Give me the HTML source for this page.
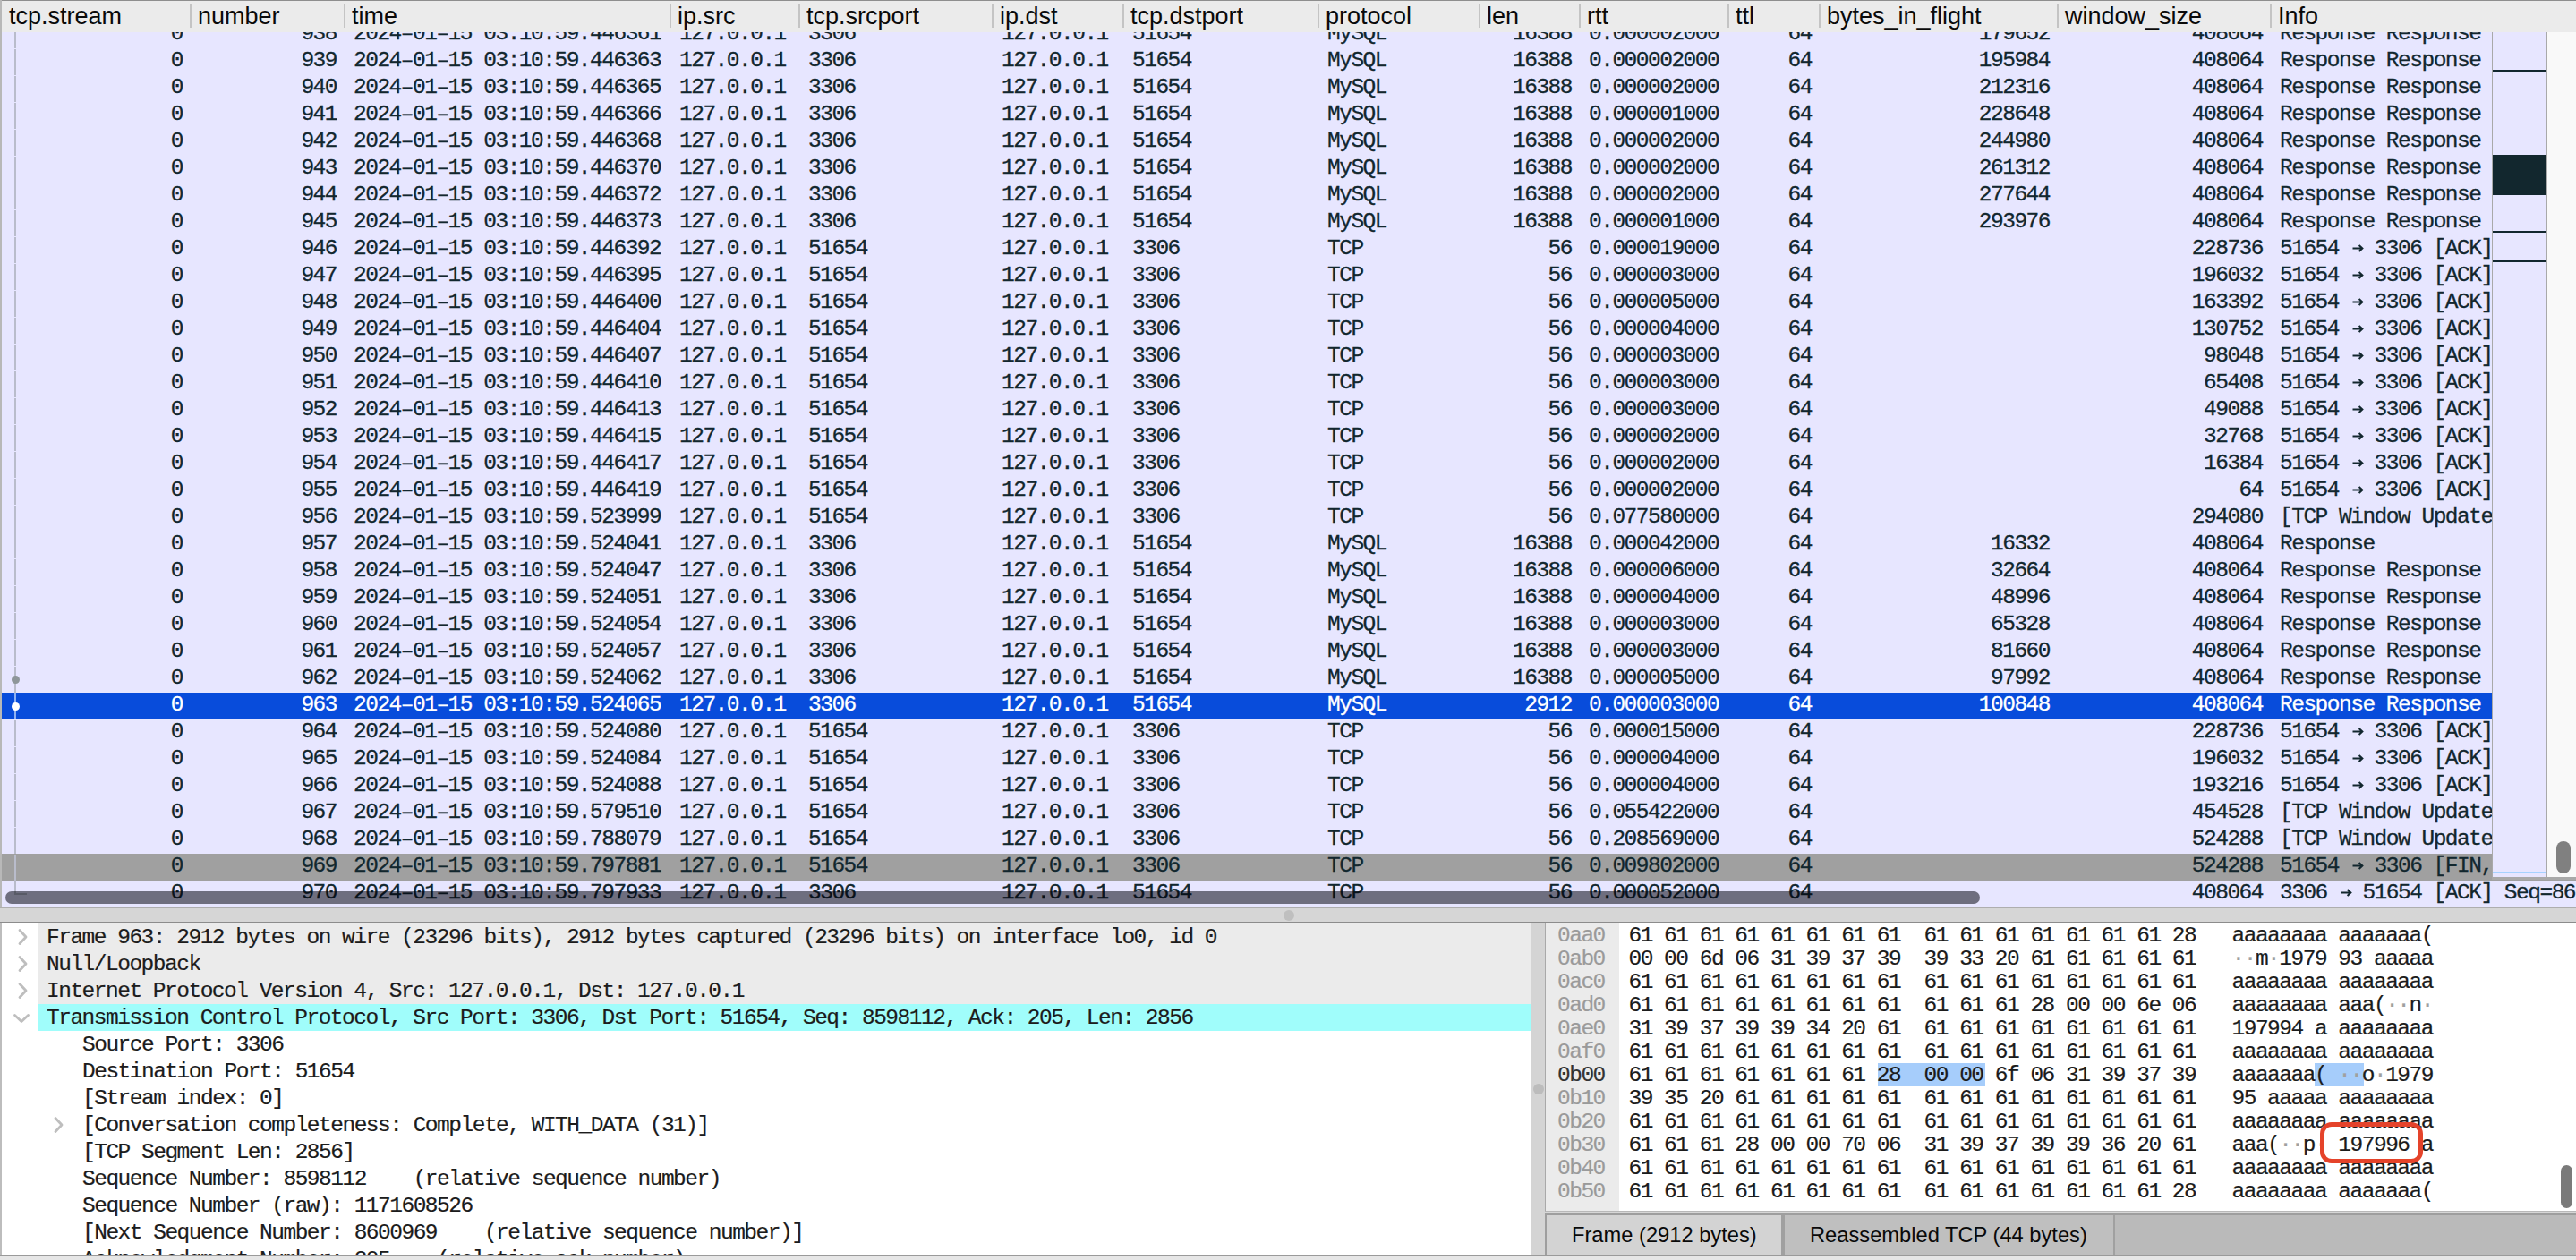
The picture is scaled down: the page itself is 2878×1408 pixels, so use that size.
<!DOCTYPE html><html><head><meta charset="utf-8"><style>html,body{margin:0;padding:0}
body{width:2878px;height:1408px;position:relative;overflow:hidden;background:#d6d6d6;font-family:"Liberation Mono",monospace;}
#pl{position:absolute;left:0;top:0;width:2878px;height:1014px;overflow:hidden;background:#e7e6ff;}
#rows{position:absolute;left:0;top:0;width:2878px;height:1014px;}
.r{position:absolute;left:2px;width:2876px;height:30px;background:#e7e6ff;color:#12272e;}
.r.sel{background:#084cdb;color:#fff}
.r.fin{background:#a0a0a0;}
.c{position:absolute;top:-1px;font-weight:normal;-webkit-text-stroke:0.3px currentColor;font-size:24.5px;letter-spacing:-1.5px;line-height:30px;white-space:pre;}
.c.R{text-align:right}
#hdr{position:absolute;left:0;top:0;width:2878px;height:36px;background:#ebebeb;border-top:1.5px solid #8e8e8e;box-sizing:border-box;font-family:"Liberation Sans",sans-serif;font-size:27px;color:#0a0a0a}
.h{position:absolute;top:0;line-height:34px;white-space:pre}
.sep{position:absolute;top:4px;width:2px;height:26px;background:#c4c4c4}
#lb{position:absolute;left:0;top:0;width:2px;height:1014px;background:#b8b8b8}
#tree{position:absolute;left:16px;top:36px;width:2px;height:964px;background:repeating-linear-gradient(to bottom,#b9bccb 0,#b9bccb 29px,transparent 29px,transparent 30px);background-position:0 -11px}
#treetick{position:absolute;left:16px;top:998px;width:14px;height:2px;background:#b9bccb}
#treesel{position:absolute;left:16px;top:774px;width:2px;height:30px;background:#8fb1f2}
.dot{position:absolute;width:9px;height:9px;border-radius:50%}
#mm{position:absolute;left:2784px;top:36px;width:60px;height:944px;background:#e7e6ff;border-left:1px solid #a9a9a9;border-right:1px solid #a9a9a9;border-bottom:3px solid #a9a9a9}
#mm i{position:absolute;left:0;width:60px;background:#12272e}
#vs{position:absolute;left:2846px;top:36px;width:32px;height:944px;background:#f9f9f9;border-bottom:3px solid #a9a9a9}
#vs i{position:absolute;left:10px;top:904px;width:16px;height:36px;border-radius:8px;background:#808080}
#hs{position:absolute;left:6px;top:996px;width:2206px;height:14px;border-radius:7px;background:rgba(0,0,10,0.52)}
#plb{position:absolute;left:0;top:1014px;width:2878px;height:1px;background:#aeaeae}
#sp1{position:absolute;left:0;top:1015px;width:2878px;height:15px;background:#d6d6d6;border-bottom:1.5px solid #8c8c8c}
#sp1 i{position:absolute;left:1434px;top:2px;width:12px;height:12px;border-radius:50%;background:#bfbfbf}
#det{position:absolute;left:0;top:1031px;width:1711px;height:373px;background:#fff;border-left:2px solid #bdbdbd;border-right:1px solid #a9a9a9;border-bottom:2px solid #9a9a9a;overflow:hidden;box-sizing:border-box}
.dbg{position:absolute;left:40px;width:1670px;height:30px}
.dbg.g{background:#ebebeb}
.dbg.cy{background:#a0fdfb}
.dt{position:absolute;font-weight:normal;-webkit-text-stroke:0.2px currentColor;font-size:24.5px;letter-spacing:-1.5px;line-height:30px;white-space:pre;color:#1c1c1c}
.ar{position:absolute}
#sp2{position:absolute;left:1711px;top:1031px;width:15px;height:373px;background:#d4d4d4}
#sp2 i{position:absolute;left:2px;top:180px;width:12px;height:12px;border-radius:50%;background:#bcbcbc}
#byt{position:absolute;left:1726px;top:1031px;width:1152px;height:323px;background:#fff;border-left:1px solid #a9a9a9;border-bottom:1.5px solid #b8b8b8;overflow:hidden;box-sizing:border-box}
#offcol{position:absolute;left:0;top:0;width:82px;height:330px;background:#ebebeb}
.off,.hx,.as{position:absolute;font-weight:normal;-webkit-text-stroke:0.2px currentColor;font-size:24.5px;letter-spacing:-1.5px;line-height:26px;white-space:pre;color:#1c1c1c}
.off{left:13px;color:#9a9a9a}
.off.dk{color:#333}
.hx{left:92.5px}
.as{left:766.5px}
.as s{text-decoration:none;color:#a0a0a0}
.hl{position:absolute;height:26px;background:#a6cdfb}
#redbox{position:absolute;left:864.5px;top:223px;width:105px;height:36px;border:5.5px solid #e5432a;border-radius:13px}
#bvs{position:absolute;left:1134px;top:271px;width:13px;height:48px;border-radius:7px;background:#7a7a7a}
#tabs{position:absolute;left:1726px;top:1356px;width:1152px;height:48px;background:#bababa;border-top:2px solid #9e9e9e;border-left:2px solid #9e9e9e;border-bottom:2.5px solid #9a9a9a;box-sizing:border-box;font-family:"Liberation Sans",sans-serif;font-size:23.7px;color:#0a0a0a}
.tab{position:absolute;top:0;height:44px;line-height:44px;box-sizing:border-box}
.t1{left:0;width:266px;background:#d3d3d3;border-right:4px solid #a0a0a0;padding-left:28px}
.t2{left:266px;width:369px;background:#bfbfbf;border-right:2px solid #a0a0a0;padding-left:28px}
#bot{position:absolute;left:0;top:1402px;width:2878px;height:6px;background:#e6e6e6;border-top:2px solid #9a9a9a;box-sizing:border-box}

.c u{text-decoration:none;display:inline-block;width:13.2px;height:0;position:relative}
.c u svg{position:absolute;left:1.5px;top:-11.5px}
</style></head><body>
<div id="pl">
<div id="rows">
<div class="r" style="top:24px"><b class="c R" style="right:2674px">0</b><b class="c R" style="right:2502px">938</b><b class="c" style="left:393px">2024–01–15 03:10:59.446361</b><b class="c" style="left:757px">127.0.0.1</b><b class="c" style="left:901px">3306</b><b class="c" style="left:1117px">127.0.0.1</b><b class="c" style="left:1263px">51654</b><b class="c" style="left:1481px">MySQL</b><b class="c R" style="right:1122px">16388</b><b class="c" style="left:1773px">0.000002000</b><b class="c R" style="right:854px">64</b><b class="c R" style="right:588px">179652</b><b class="c R" style="right:350px">408064</b><b class="c" style="left:2545px">Response Response</b></div>
<div class="r" style="top:54px"><b class="c R" style="right:2674px">0</b><b class="c R" style="right:2502px">939</b><b class="c" style="left:393px">2024–01–15 03:10:59.446363</b><b class="c" style="left:757px">127.0.0.1</b><b class="c" style="left:901px">3306</b><b class="c" style="left:1117px">127.0.0.1</b><b class="c" style="left:1263px">51654</b><b class="c" style="left:1481px">MySQL</b><b class="c R" style="right:1122px">16388</b><b class="c" style="left:1773px">0.000002000</b><b class="c R" style="right:854px">64</b><b class="c R" style="right:588px">195984</b><b class="c R" style="right:350px">408064</b><b class="c" style="left:2545px">Response Response</b></div>
<div class="r" style="top:84px"><b class="c R" style="right:2674px">0</b><b class="c R" style="right:2502px">940</b><b class="c" style="left:393px">2024–01–15 03:10:59.446365</b><b class="c" style="left:757px">127.0.0.1</b><b class="c" style="left:901px">3306</b><b class="c" style="left:1117px">127.0.0.1</b><b class="c" style="left:1263px">51654</b><b class="c" style="left:1481px">MySQL</b><b class="c R" style="right:1122px">16388</b><b class="c" style="left:1773px">0.000002000</b><b class="c R" style="right:854px">64</b><b class="c R" style="right:588px">212316</b><b class="c R" style="right:350px">408064</b><b class="c" style="left:2545px">Response Response</b></div>
<div class="r" style="top:114px"><b class="c R" style="right:2674px">0</b><b class="c R" style="right:2502px">941</b><b class="c" style="left:393px">2024–01–15 03:10:59.446366</b><b class="c" style="left:757px">127.0.0.1</b><b class="c" style="left:901px">3306</b><b class="c" style="left:1117px">127.0.0.1</b><b class="c" style="left:1263px">51654</b><b class="c" style="left:1481px">MySQL</b><b class="c R" style="right:1122px">16388</b><b class="c" style="left:1773px">0.000001000</b><b class="c R" style="right:854px">64</b><b class="c R" style="right:588px">228648</b><b class="c R" style="right:350px">408064</b><b class="c" style="left:2545px">Response Response</b></div>
<div class="r" style="top:144px"><b class="c R" style="right:2674px">0</b><b class="c R" style="right:2502px">942</b><b class="c" style="left:393px">2024–01–15 03:10:59.446368</b><b class="c" style="left:757px">127.0.0.1</b><b class="c" style="left:901px">3306</b><b class="c" style="left:1117px">127.0.0.1</b><b class="c" style="left:1263px">51654</b><b class="c" style="left:1481px">MySQL</b><b class="c R" style="right:1122px">16388</b><b class="c" style="left:1773px">0.000002000</b><b class="c R" style="right:854px">64</b><b class="c R" style="right:588px">244980</b><b class="c R" style="right:350px">408064</b><b class="c" style="left:2545px">Response Response</b></div>
<div class="r" style="top:174px"><b class="c R" style="right:2674px">0</b><b class="c R" style="right:2502px">943</b><b class="c" style="left:393px">2024–01–15 03:10:59.446370</b><b class="c" style="left:757px">127.0.0.1</b><b class="c" style="left:901px">3306</b><b class="c" style="left:1117px">127.0.0.1</b><b class="c" style="left:1263px">51654</b><b class="c" style="left:1481px">MySQL</b><b class="c R" style="right:1122px">16388</b><b class="c" style="left:1773px">0.000002000</b><b class="c R" style="right:854px">64</b><b class="c R" style="right:588px">261312</b><b class="c R" style="right:350px">408064</b><b class="c" style="left:2545px">Response Response</b></div>
<div class="r" style="top:204px"><b class="c R" style="right:2674px">0</b><b class="c R" style="right:2502px">944</b><b class="c" style="left:393px">2024–01–15 03:10:59.446372</b><b class="c" style="left:757px">127.0.0.1</b><b class="c" style="left:901px">3306</b><b class="c" style="left:1117px">127.0.0.1</b><b class="c" style="left:1263px">51654</b><b class="c" style="left:1481px">MySQL</b><b class="c R" style="right:1122px">16388</b><b class="c" style="left:1773px">0.000002000</b><b class="c R" style="right:854px">64</b><b class="c R" style="right:588px">277644</b><b class="c R" style="right:350px">408064</b><b class="c" style="left:2545px">Response Response</b></div>
<div class="r" style="top:234px"><b class="c R" style="right:2674px">0</b><b class="c R" style="right:2502px">945</b><b class="c" style="left:393px">2024–01–15 03:10:59.446373</b><b class="c" style="left:757px">127.0.0.1</b><b class="c" style="left:901px">3306</b><b class="c" style="left:1117px">127.0.0.1</b><b class="c" style="left:1263px">51654</b><b class="c" style="left:1481px">MySQL</b><b class="c R" style="right:1122px">16388</b><b class="c" style="left:1773px">0.000001000</b><b class="c R" style="right:854px">64</b><b class="c R" style="right:588px">293976</b><b class="c R" style="right:350px">408064</b><b class="c" style="left:2545px">Response Response</b></div>
<div class="r" style="top:264px"><b class="c R" style="right:2674px">0</b><b class="c R" style="right:2502px">946</b><b class="c" style="left:393px">2024–01–15 03:10:59.446392</b><b class="c" style="left:757px">127.0.0.1</b><b class="c" style="left:901px">51654</b><b class="c" style="left:1117px">127.0.0.1</b><b class="c" style="left:1263px">3306</b><b class="c" style="left:1481px">TCP</b><b class="c R" style="right:1122px">56</b><b class="c" style="left:1773px">0.000019000</b><b class="c R" style="right:854px">64</b><b class="c R" style="right:350px">228736</b><b class="c" style="left:2545px">51654 <u><svg width="13" height="9" viewBox="0 0 13 9"><path d="M0.5 4.5H11.2M7.6 1L11.3 4.5L7.6 8" fill="none" stroke="currentColor" stroke-width="2.1"/></svg></u> 3306 [ACK]</b></div>
<div class="r" style="top:294px"><b class="c R" style="right:2674px">0</b><b class="c R" style="right:2502px">947</b><b class="c" style="left:393px">2024–01–15 03:10:59.446395</b><b class="c" style="left:757px">127.0.0.1</b><b class="c" style="left:901px">51654</b><b class="c" style="left:1117px">127.0.0.1</b><b class="c" style="left:1263px">3306</b><b class="c" style="left:1481px">TCP</b><b class="c R" style="right:1122px">56</b><b class="c" style="left:1773px">0.000003000</b><b class="c R" style="right:854px">64</b><b class="c R" style="right:350px">196032</b><b class="c" style="left:2545px">51654 <u><svg width="13" height="9" viewBox="0 0 13 9"><path d="M0.5 4.5H11.2M7.6 1L11.3 4.5L7.6 8" fill="none" stroke="currentColor" stroke-width="2.1"/></svg></u> 3306 [ACK]</b></div>
<div class="r" style="top:324px"><b class="c R" style="right:2674px">0</b><b class="c R" style="right:2502px">948</b><b class="c" style="left:393px">2024–01–15 03:10:59.446400</b><b class="c" style="left:757px">127.0.0.1</b><b class="c" style="left:901px">51654</b><b class="c" style="left:1117px">127.0.0.1</b><b class="c" style="left:1263px">3306</b><b class="c" style="left:1481px">TCP</b><b class="c R" style="right:1122px">56</b><b class="c" style="left:1773px">0.000005000</b><b class="c R" style="right:854px">64</b><b class="c R" style="right:350px">163392</b><b class="c" style="left:2545px">51654 <u><svg width="13" height="9" viewBox="0 0 13 9"><path d="M0.5 4.5H11.2M7.6 1L11.3 4.5L7.6 8" fill="none" stroke="currentColor" stroke-width="2.1"/></svg></u> 3306 [ACK]</b></div>
<div class="r" style="top:354px"><b class="c R" style="right:2674px">0</b><b class="c R" style="right:2502px">949</b><b class="c" style="left:393px">2024–01–15 03:10:59.446404</b><b class="c" style="left:757px">127.0.0.1</b><b class="c" style="left:901px">51654</b><b class="c" style="left:1117px">127.0.0.1</b><b class="c" style="left:1263px">3306</b><b class="c" style="left:1481px">TCP</b><b class="c R" style="right:1122px">56</b><b class="c" style="left:1773px">0.000004000</b><b class="c R" style="right:854px">64</b><b class="c R" style="right:350px">130752</b><b class="c" style="left:2545px">51654 <u><svg width="13" height="9" viewBox="0 0 13 9"><path d="M0.5 4.5H11.2M7.6 1L11.3 4.5L7.6 8" fill="none" stroke="currentColor" stroke-width="2.1"/></svg></u> 3306 [ACK]</b></div>
<div class="r" style="top:384px"><b class="c R" style="right:2674px">0</b><b class="c R" style="right:2502px">950</b><b class="c" style="left:393px">2024–01–15 03:10:59.446407</b><b class="c" style="left:757px">127.0.0.1</b><b class="c" style="left:901px">51654</b><b class="c" style="left:1117px">127.0.0.1</b><b class="c" style="left:1263px">3306</b><b class="c" style="left:1481px">TCP</b><b class="c R" style="right:1122px">56</b><b class="c" style="left:1773px">0.000003000</b><b class="c R" style="right:854px">64</b><b class="c R" style="right:350px">98048</b><b class="c" style="left:2545px">51654 <u><svg width="13" height="9" viewBox="0 0 13 9"><path d="M0.5 4.5H11.2M7.6 1L11.3 4.5L7.6 8" fill="none" stroke="currentColor" stroke-width="2.1"/></svg></u> 3306 [ACK]</b></div>
<div class="r" style="top:414px"><b class="c R" style="right:2674px">0</b><b class="c R" style="right:2502px">951</b><b class="c" style="left:393px">2024–01–15 03:10:59.446410</b><b class="c" style="left:757px">127.0.0.1</b><b class="c" style="left:901px">51654</b><b class="c" style="left:1117px">127.0.0.1</b><b class="c" style="left:1263px">3306</b><b class="c" style="left:1481px">TCP</b><b class="c R" style="right:1122px">56</b><b class="c" style="left:1773px">0.000003000</b><b class="c R" style="right:854px">64</b><b class="c R" style="right:350px">65408</b><b class="c" style="left:2545px">51654 <u><svg width="13" height="9" viewBox="0 0 13 9"><path d="M0.5 4.5H11.2M7.6 1L11.3 4.5L7.6 8" fill="none" stroke="currentColor" stroke-width="2.1"/></svg></u> 3306 [ACK]</b></div>
<div class="r" style="top:444px"><b class="c R" style="right:2674px">0</b><b class="c R" style="right:2502px">952</b><b class="c" style="left:393px">2024–01–15 03:10:59.446413</b><b class="c" style="left:757px">127.0.0.1</b><b class="c" style="left:901px">51654</b><b class="c" style="left:1117px">127.0.0.1</b><b class="c" style="left:1263px">3306</b><b class="c" style="left:1481px">TCP</b><b class="c R" style="right:1122px">56</b><b class="c" style="left:1773px">0.000003000</b><b class="c R" style="right:854px">64</b><b class="c R" style="right:350px">49088</b><b class="c" style="left:2545px">51654 <u><svg width="13" height="9" viewBox="0 0 13 9"><path d="M0.5 4.5H11.2M7.6 1L11.3 4.5L7.6 8" fill="none" stroke="currentColor" stroke-width="2.1"/></svg></u> 3306 [ACK]</b></div>
<div class="r" style="top:474px"><b class="c R" style="right:2674px">0</b><b class="c R" style="right:2502px">953</b><b class="c" style="left:393px">2024–01–15 03:10:59.446415</b><b class="c" style="left:757px">127.0.0.1</b><b class="c" style="left:901px">51654</b><b class="c" style="left:1117px">127.0.0.1</b><b class="c" style="left:1263px">3306</b><b class="c" style="left:1481px">TCP</b><b class="c R" style="right:1122px">56</b><b class="c" style="left:1773px">0.000002000</b><b class="c R" style="right:854px">64</b><b class="c R" style="right:350px">32768</b><b class="c" style="left:2545px">51654 <u><svg width="13" height="9" viewBox="0 0 13 9"><path d="M0.5 4.5H11.2M7.6 1L11.3 4.5L7.6 8" fill="none" stroke="currentColor" stroke-width="2.1"/></svg></u> 3306 [ACK]</b></div>
<div class="r" style="top:504px"><b class="c R" style="right:2674px">0</b><b class="c R" style="right:2502px">954</b><b class="c" style="left:393px">2024–01–15 03:10:59.446417</b><b class="c" style="left:757px">127.0.0.1</b><b class="c" style="left:901px">51654</b><b class="c" style="left:1117px">127.0.0.1</b><b class="c" style="left:1263px">3306</b><b class="c" style="left:1481px">TCP</b><b class="c R" style="right:1122px">56</b><b class="c" style="left:1773px">0.000002000</b><b class="c R" style="right:854px">64</b><b class="c R" style="right:350px">16384</b><b class="c" style="left:2545px">51654 <u><svg width="13" height="9" viewBox="0 0 13 9"><path d="M0.5 4.5H11.2M7.6 1L11.3 4.5L7.6 8" fill="none" stroke="currentColor" stroke-width="2.1"/></svg></u> 3306 [ACK]</b></div>
<div class="r" style="top:534px"><b class="c R" style="right:2674px">0</b><b class="c R" style="right:2502px">955</b><b class="c" style="left:393px">2024–01–15 03:10:59.446419</b><b class="c" style="left:757px">127.0.0.1</b><b class="c" style="left:901px">51654</b><b class="c" style="left:1117px">127.0.0.1</b><b class="c" style="left:1263px">3306</b><b class="c" style="left:1481px">TCP</b><b class="c R" style="right:1122px">56</b><b class="c" style="left:1773px">0.000002000</b><b class="c R" style="right:854px">64</b><b class="c R" style="right:350px">64</b><b class="c" style="left:2545px">51654 <u><svg width="13" height="9" viewBox="0 0 13 9"><path d="M0.5 4.5H11.2M7.6 1L11.3 4.5L7.6 8" fill="none" stroke="currentColor" stroke-width="2.1"/></svg></u> 3306 [ACK]</b></div>
<div class="r" style="top:564px"><b class="c R" style="right:2674px">0</b><b class="c R" style="right:2502px">956</b><b class="c" style="left:393px">2024–01–15 03:10:59.523999</b><b class="c" style="left:757px">127.0.0.1</b><b class="c" style="left:901px">51654</b><b class="c" style="left:1117px">127.0.0.1</b><b class="c" style="left:1263px">3306</b><b class="c" style="left:1481px">TCP</b><b class="c R" style="right:1122px">56</b><b class="c" style="left:1773px">0.077580000</b><b class="c R" style="right:854px">64</b><b class="c R" style="right:350px">294080</b><b class="c" style="left:2545px">[TCP Window Update] 51654 <u><svg width="13" height="9" viewBox="0 0 13 9"><path d="M0.5 4.5H11.2M7.6 1L11.3 4.5L7.6 8" fill="none" stroke="currentColor" stroke-width="2.1"/></svg></u> 3306 [ACK]</b></div>
<div class="r" style="top:594px"><b class="c R" style="right:2674px">0</b><b class="c R" style="right:2502px">957</b><b class="c" style="left:393px">2024–01–15 03:10:59.524041</b><b class="c" style="left:757px">127.0.0.1</b><b class="c" style="left:901px">3306</b><b class="c" style="left:1117px">127.0.0.1</b><b class="c" style="left:1263px">51654</b><b class="c" style="left:1481px">MySQL</b><b class="c R" style="right:1122px">16388</b><b class="c" style="left:1773px">0.000042000</b><b class="c R" style="right:854px">64</b><b class="c R" style="right:588px">16332</b><b class="c R" style="right:350px">408064</b><b class="c" style="left:2545px">Response</b></div>
<div class="r" style="top:624px"><b class="c R" style="right:2674px">0</b><b class="c R" style="right:2502px">958</b><b class="c" style="left:393px">2024–01–15 03:10:59.524047</b><b class="c" style="left:757px">127.0.0.1</b><b class="c" style="left:901px">3306</b><b class="c" style="left:1117px">127.0.0.1</b><b class="c" style="left:1263px">51654</b><b class="c" style="left:1481px">MySQL</b><b class="c R" style="right:1122px">16388</b><b class="c" style="left:1773px">0.000006000</b><b class="c R" style="right:854px">64</b><b class="c R" style="right:588px">32664</b><b class="c R" style="right:350px">408064</b><b class="c" style="left:2545px">Response Response</b></div>
<div class="r" style="top:654px"><b class="c R" style="right:2674px">0</b><b class="c R" style="right:2502px">959</b><b class="c" style="left:393px">2024–01–15 03:10:59.524051</b><b class="c" style="left:757px">127.0.0.1</b><b class="c" style="left:901px">3306</b><b class="c" style="left:1117px">127.0.0.1</b><b class="c" style="left:1263px">51654</b><b class="c" style="left:1481px">MySQL</b><b class="c R" style="right:1122px">16388</b><b class="c" style="left:1773px">0.000004000</b><b class="c R" style="right:854px">64</b><b class="c R" style="right:588px">48996</b><b class="c R" style="right:350px">408064</b><b class="c" style="left:2545px">Response Response</b></div>
<div class="r" style="top:684px"><b class="c R" style="right:2674px">0</b><b class="c R" style="right:2502px">960</b><b class="c" style="left:393px">2024–01–15 03:10:59.524054</b><b class="c" style="left:757px">127.0.0.1</b><b class="c" style="left:901px">3306</b><b class="c" style="left:1117px">127.0.0.1</b><b class="c" style="left:1263px">51654</b><b class="c" style="left:1481px">MySQL</b><b class="c R" style="right:1122px">16388</b><b class="c" style="left:1773px">0.000003000</b><b class="c R" style="right:854px">64</b><b class="c R" style="right:588px">65328</b><b class="c R" style="right:350px">408064</b><b class="c" style="left:2545px">Response Response</b></div>
<div class="r" style="top:714px"><b class="c R" style="right:2674px">0</b><b class="c R" style="right:2502px">961</b><b class="c" style="left:393px">2024–01–15 03:10:59.524057</b><b class="c" style="left:757px">127.0.0.1</b><b class="c" style="left:901px">3306</b><b class="c" style="left:1117px">127.0.0.1</b><b class="c" style="left:1263px">51654</b><b class="c" style="left:1481px">MySQL</b><b class="c R" style="right:1122px">16388</b><b class="c" style="left:1773px">0.000003000</b><b class="c R" style="right:854px">64</b><b class="c R" style="right:588px">81660</b><b class="c R" style="right:350px">408064</b><b class="c" style="left:2545px">Response Response</b></div>
<div class="r" style="top:744px"><b class="c R" style="right:2674px">0</b><b class="c R" style="right:2502px">962</b><b class="c" style="left:393px">2024–01–15 03:10:59.524062</b><b class="c" style="left:757px">127.0.0.1</b><b class="c" style="left:901px">3306</b><b class="c" style="left:1117px">127.0.0.1</b><b class="c" style="left:1263px">51654</b><b class="c" style="left:1481px">MySQL</b><b class="c R" style="right:1122px">16388</b><b class="c" style="left:1773px">0.000005000</b><b class="c R" style="right:854px">64</b><b class="c R" style="right:588px">97992</b><b class="c R" style="right:350px">408064</b><b class="c" style="left:2545px">Response Response</b></div>
<div class="r sel" style="top:774px"><b class="c R" style="right:2674px">0</b><b class="c R" style="right:2502px">963</b><b class="c" style="left:393px">2024–01–15 03:10:59.524065</b><b class="c" style="left:757px">127.0.0.1</b><b class="c" style="left:901px">3306</b><b class="c" style="left:1117px">127.0.0.1</b><b class="c" style="left:1263px">51654</b><b class="c" style="left:1481px">MySQL</b><b class="c R" style="right:1122px">2912</b><b class="c" style="left:1773px">0.000003000</b><b class="c R" style="right:854px">64</b><b class="c R" style="right:588px">100848</b><b class="c R" style="right:350px">408064</b><b class="c" style="left:2545px">Response Response</b></div>
<div class="r" style="top:804px"><b class="c R" style="right:2674px">0</b><b class="c R" style="right:2502px">964</b><b class="c" style="left:393px">2024–01–15 03:10:59.524080</b><b class="c" style="left:757px">127.0.0.1</b><b class="c" style="left:901px">51654</b><b class="c" style="left:1117px">127.0.0.1</b><b class="c" style="left:1263px">3306</b><b class="c" style="left:1481px">TCP</b><b class="c R" style="right:1122px">56</b><b class="c" style="left:1773px">0.000015000</b><b class="c R" style="right:854px">64</b><b class="c R" style="right:350px">228736</b><b class="c" style="left:2545px">51654 <u><svg width="13" height="9" viewBox="0 0 13 9"><path d="M0.5 4.5H11.2M7.6 1L11.3 4.5L7.6 8" fill="none" stroke="currentColor" stroke-width="2.1"/></svg></u> 3306 [ACK]</b></div>
<div class="r" style="top:834px"><b class="c R" style="right:2674px">0</b><b class="c R" style="right:2502px">965</b><b class="c" style="left:393px">2024–01–15 03:10:59.524084</b><b class="c" style="left:757px">127.0.0.1</b><b class="c" style="left:901px">51654</b><b class="c" style="left:1117px">127.0.0.1</b><b class="c" style="left:1263px">3306</b><b class="c" style="left:1481px">TCP</b><b class="c R" style="right:1122px">56</b><b class="c" style="left:1773px">0.000004000</b><b class="c R" style="right:854px">64</b><b class="c R" style="right:350px">196032</b><b class="c" style="left:2545px">51654 <u><svg width="13" height="9" viewBox="0 0 13 9"><path d="M0.5 4.5H11.2M7.6 1L11.3 4.5L7.6 8" fill="none" stroke="currentColor" stroke-width="2.1"/></svg></u> 3306 [ACK]</b></div>
<div class="r" style="top:864px"><b class="c R" style="right:2674px">0</b><b class="c R" style="right:2502px">966</b><b class="c" style="left:393px">2024–01–15 03:10:59.524088</b><b class="c" style="left:757px">127.0.0.1</b><b class="c" style="left:901px">51654</b><b class="c" style="left:1117px">127.0.0.1</b><b class="c" style="left:1263px">3306</b><b class="c" style="left:1481px">TCP</b><b class="c R" style="right:1122px">56</b><b class="c" style="left:1773px">0.000004000</b><b class="c R" style="right:854px">64</b><b class="c R" style="right:350px">193216</b><b class="c" style="left:2545px">51654 <u><svg width="13" height="9" viewBox="0 0 13 9"><path d="M0.5 4.5H11.2M7.6 1L11.3 4.5L7.6 8" fill="none" stroke="currentColor" stroke-width="2.1"/></svg></u> 3306 [ACK]</b></div>
<div class="r" style="top:894px"><b class="c R" style="right:2674px">0</b><b class="c R" style="right:2502px">967</b><b class="c" style="left:393px">2024–01–15 03:10:59.579510</b><b class="c" style="left:757px">127.0.0.1</b><b class="c" style="left:901px">51654</b><b class="c" style="left:1117px">127.0.0.1</b><b class="c" style="left:1263px">3306</b><b class="c" style="left:1481px">TCP</b><b class="c R" style="right:1122px">56</b><b class="c" style="left:1773px">0.055422000</b><b class="c R" style="right:854px">64</b><b class="c R" style="right:350px">454528</b><b class="c" style="left:2545px">[TCP Window Update] 51654 <u><svg width="13" height="9" viewBox="0 0 13 9"><path d="M0.5 4.5H11.2M7.6 1L11.3 4.5L7.6 8" fill="none" stroke="currentColor" stroke-width="2.1"/></svg></u> 3306 [ACK]</b></div>
<div class="r" style="top:924px"><b class="c R" style="right:2674px">0</b><b class="c R" style="right:2502px">968</b><b class="c" style="left:393px">2024–01–15 03:10:59.788079</b><b class="c" style="left:757px">127.0.0.1</b><b class="c" style="left:901px">51654</b><b class="c" style="left:1117px">127.0.0.1</b><b class="c" style="left:1263px">3306</b><b class="c" style="left:1481px">TCP</b><b class="c R" style="right:1122px">56</b><b class="c" style="left:1773px">0.208569000</b><b class="c R" style="right:854px">64</b><b class="c R" style="right:350px">524288</b><b class="c" style="left:2545px">[TCP Window Update] 51654 <u><svg width="13" height="9" viewBox="0 0 13 9"><path d="M0.5 4.5H11.2M7.6 1L11.3 4.5L7.6 8" fill="none" stroke="currentColor" stroke-width="2.1"/></svg></u> 3306 [ACK]</b></div>
<div class="r fin" style="top:954px"><b class="c R" style="right:2674px">0</b><b class="c R" style="right:2502px">969</b><b class="c" style="left:393px">2024–01–15 03:10:59.797881</b><b class="c" style="left:757px">127.0.0.1</b><b class="c" style="left:901px">51654</b><b class="c" style="left:1117px">127.0.0.1</b><b class="c" style="left:1263px">3306</b><b class="c" style="left:1481px">TCP</b><b class="c R" style="right:1122px">56</b><b class="c" style="left:1773px">0.009802000</b><b class="c R" style="right:854px">64</b><b class="c R" style="right:350px">524288</b><b class="c" style="left:2545px">51654 <u><svg width="13" height="9" viewBox="0 0 13 9"><path d="M0.5 4.5H11.2M7.6 1L11.3 4.5L7.6 8" fill="none" stroke="currentColor" stroke-width="2.1"/></svg></u> 3306 [FIN, ACK] Seq=205 Ack=8600969</b></div>
<div class="r last" style="top:984px"><b class="c R" style="right:2674px">0</b><b class="c R" style="right:2502px">970</b><b class="c" style="left:393px">2024–01–15 03:10:59.797933</b><b class="c" style="left:757px">127.0.0.1</b><b class="c" style="left:901px">3306</b><b class="c" style="left:1117px">127.0.0.1</b><b class="c" style="left:1263px">51654</b><b class="c" style="left:1481px">TCP</b><b class="c R" style="right:1122px">56</b><b class="c" style="left:1773px">0.000052000</b><b class="c R" style="right:854px">64</b><b class="c R" style="right:350px">408064</b><b class="c" style="left:2545px">3306 <u><svg width="13" height="9" viewBox="0 0 13 9"><path d="M0.5 4.5H11.2M7.6 1L11.3 4.5L7.6 8" fill="none" stroke="currentColor" stroke-width="2.1"/></svg></u> 51654 [ACK] Seq=8600969 Ack=205 Win=408064 Len=0</b></div>
</div>
</div>
<div id="hdr">
<span class="h" style="left:10px">tcp.stream</span>
<span class="h" style="left:221px">number</span>
<span class="h" style="left:393px">time</span>
<span class="h" style="left:757px">ip.src</span>
<span class="h" style="left:901px">tcp.srcport</span>
<span class="h" style="left:1117px">ip.dst</span>
<span class="h" style="left:1263px">tcp.dstport</span>
<span class="h" style="left:1481px">protocol</span>
<span class="h" style="left:1661px">len</span>
<span class="h" style="left:1773px">rtt</span>
<span class="h" style="left:1939px">ttl</span>
<span class="h" style="left:2041px">bytes_in_flight</span>
<span class="h" style="left:2307px">window_size</span>
<span class="h" style="left:2545px">Info</span>
<i class="sep" style="left:212px"></i>
<i class="sep" style="left:384px"></i>
<i class="sep" style="left:748px"></i>
<i class="sep" style="left:892px"></i>
<i class="sep" style="left:1108px"></i>
<i class="sep" style="left:1254px"></i>
<i class="sep" style="left:1472px"></i>
<i class="sep" style="left:1652px"></i>
<i class="sep" style="left:1764px"></i>
<i class="sep" style="left:1930px"></i>
<i class="sep" style="left:2032px"></i>
<i class="sep" style="left:2298px"></i>
<i class="sep" style="left:2536px"></i>
</div>
<div id="lb"></div>
<div id="tree"></div><div id="treetick"></div>
<div class="dot" style="left:13px;top:755px;background:#8e9699"></div>
<div id="treesel"></div>
<div class="dot" style="left:13px;top:785px;background:#fff"></div>
<div id="mm"><i style="top:42px;height:1.5px"></i><i style="top:137px;height:45px"></i><i style="top:222px;height:1.5px"></i><i style="top:255px;height:1.5px"></i><i style="top:938px;height:2px;background:#a6d2ff"></i></div>
<div id="vs"><i></i></div>
<div id="hs"></div>
<div id="plb"></div>
<div id="sp1"><i></i></div>
<div id="det">
<div class="dbg g" style="top:0px;height:31px"></div>
<b class="dt" style="top:2px;left:50px">Frame 963: 2912 bytes on wire (23296 bits), 2912 bytes captured (23296 bits) on interface lo0, id 0</b>
<svg class="ar" style="top:6px;left:17px" width="14" height="20" viewBox="0 0 14 20"><path d="M3 2.5 L10 10 L3 17.5" fill="none" stroke="#bebebe" stroke-width="2.8" stroke-linecap="round" stroke-linejoin="round"/></svg>
<div class="dbg g" style="top:31px"></div>
<b class="dt" style="top:32px;left:50px">Null/Loopback</b>
<svg class="ar" style="top:36px;left:17px" width="14" height="20" viewBox="0 0 14 20"><path d="M3 2.5 L10 10 L3 17.5" fill="none" stroke="#bebebe" stroke-width="2.8" stroke-linecap="round" stroke-linejoin="round"/></svg>
<div class="dbg g" style="top:61px"></div>
<b class="dt" style="top:62px;left:50px">Internet Protocol Version 4, Src: 127.0.0.1, Dst: 127.0.0.1</b>
<svg class="ar" style="top:66px;left:17px" width="14" height="20" viewBox="0 0 14 20"><path d="M3 2.5 L10 10 L3 17.5" fill="none" stroke="#bebebe" stroke-width="2.8" stroke-linecap="round" stroke-linejoin="round"/></svg>
<div class="dbg cy" style="top:91px"></div>
<b class="dt" style="top:92px;left:50px">Transmission Control Protocol, Src Port: 3306, Dst Port: 51654, Seq: 8598112, Ack: 205, Len: 2856</b>
<svg class="ar" style="top:101px;left:11.5px" width="20" height="14" viewBox="0 0 20 14"><path d="M2.5 2.5 L10 9.5 L17.5 2.5" fill="none" stroke="#bebebe" stroke-width="2.8" stroke-linecap="round" stroke-linejoin="round"/></svg>
<b class="dt" style="top:122px;left:90px">Source Port: 3306</b>
<b class="dt" style="top:152px;left:90px">Destination Port: 51654</b>
<b class="dt" style="top:182px;left:90px">[Stream index: 0]</b>
<b class="dt" style="top:212px;left:90px">[Conversation completeness: Complete, WITH_DATA (31)]</b>
<svg class="ar" style="top:216px;left:57px" width="14" height="20" viewBox="0 0 14 20"><path d="M3 2.5 L10 10 L3 17.5" fill="none" stroke="#bebebe" stroke-width="2.8" stroke-linecap="round" stroke-linejoin="round"/></svg>
<b class="dt" style="top:242px;left:90px">[TCP Segment Len: 2856]</b>
<b class="dt" style="top:272px;left:90px">Sequence Number: 8598112    (relative sequence number)</b>
<b class="dt" style="top:302px;left:90px">Sequence Number (raw): 1171608526</b>
<b class="dt" style="top:332px;left:90px">[Next Sequence Number: 8600969    (relative sequence number)]</b>
<b class="dt" style="top:362px;left:90px">Acknowledgment Number: 205    (relative ack number)</b>
</div>
<div id="sp2"><i></i></div>
<div id="byt"><div id="offcol"></div>
<div class="hl" style="left:370.5px;top:157px;width:120px"></div>
<div class="hl" style="left:858.5px;top:157px;width:55px"></div>
<b class="off" style="top:2px">0aa0</b>
<b class="hx" style="top:2px">61 61 61 61 61 61 61 61  61 61 61 61 61 61 61 28</b>
<b class="as" style="top:2px">aaaaaaaa aaaaaaa(</b>
<b class="off" style="top:28px">0ab0</b>
<b class="hx" style="top:28px">00 00 6d 06 31 39 37 39  39 33 20 61 61 61 61 61</b>
<b class="as" style="top:28px"><s>·</s><s>·</s>m<s>·</s>1979 93 aaaaa</b>
<b class="off" style="top:54px">0ac0</b>
<b class="hx" style="top:54px">61 61 61 61 61 61 61 61  61 61 61 61 61 61 61 61</b>
<b class="as" style="top:54px">aaaaaaaa aaaaaaaa</b>
<b class="off" style="top:80px">0ad0</b>
<b class="hx" style="top:80px">61 61 61 61 61 61 61 61  61 61 61 28 00 00 6e 06</b>
<b class="as" style="top:80px">aaaaaaaa aaa(<s>·</s><s>·</s>n<s>·</s></b>
<b class="off" style="top:106px">0ae0</b>
<b class="hx" style="top:106px">31 39 37 39 39 34 20 61  61 61 61 61 61 61 61 61</b>
<b class="as" style="top:106px">197994 a aaaaaaaa</b>
<b class="off" style="top:132px">0af0</b>
<b class="hx" style="top:132px">61 61 61 61 61 61 61 61  61 61 61 61 61 61 61 61</b>
<b class="as" style="top:132px">aaaaaaaa aaaaaaaa</b>
<b class="off dk" style="top:158px">0b00</b>
<b class="hx" style="top:158px">61 61 61 61 61 61 61 28  00 00 6f 06 31 39 37 39</b>
<b class="as" style="top:158px">aaaaaaa( <s>·</s><s>·</s>o<s>·</s>1979</b>
<b class="off" style="top:184px">0b10</b>
<b class="hx" style="top:184px">39 35 20 61 61 61 61 61  61 61 61 61 61 61 61 61</b>
<b class="as" style="top:184px">95 aaaaa aaaaaaaa</b>
<b class="off" style="top:210px">0b20</b>
<b class="hx" style="top:210px">61 61 61 61 61 61 61 61  61 61 61 61 61 61 61 61</b>
<b class="as" style="top:210px">aaaaaaaa aaaaaaaa</b>
<b class="off" style="top:236px">0b30</b>
<b class="hx" style="top:236px">61 61 61 28 00 00 70 06  31 39 37 39 39 36 20 61</b>
<b class="as" style="top:236px">aaa(<s>·</s><s>·</s>p<s>·</s> 197996 a</b>
<b class="off" style="top:262px">0b40</b>
<b class="hx" style="top:262px">61 61 61 61 61 61 61 61  61 61 61 61 61 61 61 61</b>
<b class="as" style="top:262px">aaaaaaaa aaaaaaaa</b>
<b class="off" style="top:288px">0b50</b>
<b class="hx" style="top:288px">61 61 61 61 61 61 61 61  61 61 61 61 61 61 61 28</b>
<b class="as" style="top:288px">aaaaaaaa aaaaaaa(</b>
<div id="redbox"></div>
<div id="bvs"></div>
</div>
<div id="tabs"><div class="tab t1">Frame (2912 bytes)</div><div class="tab t2">Reassembled TCP (44 bytes)</div></div>
<div id="bot"></div>
</body></html>
